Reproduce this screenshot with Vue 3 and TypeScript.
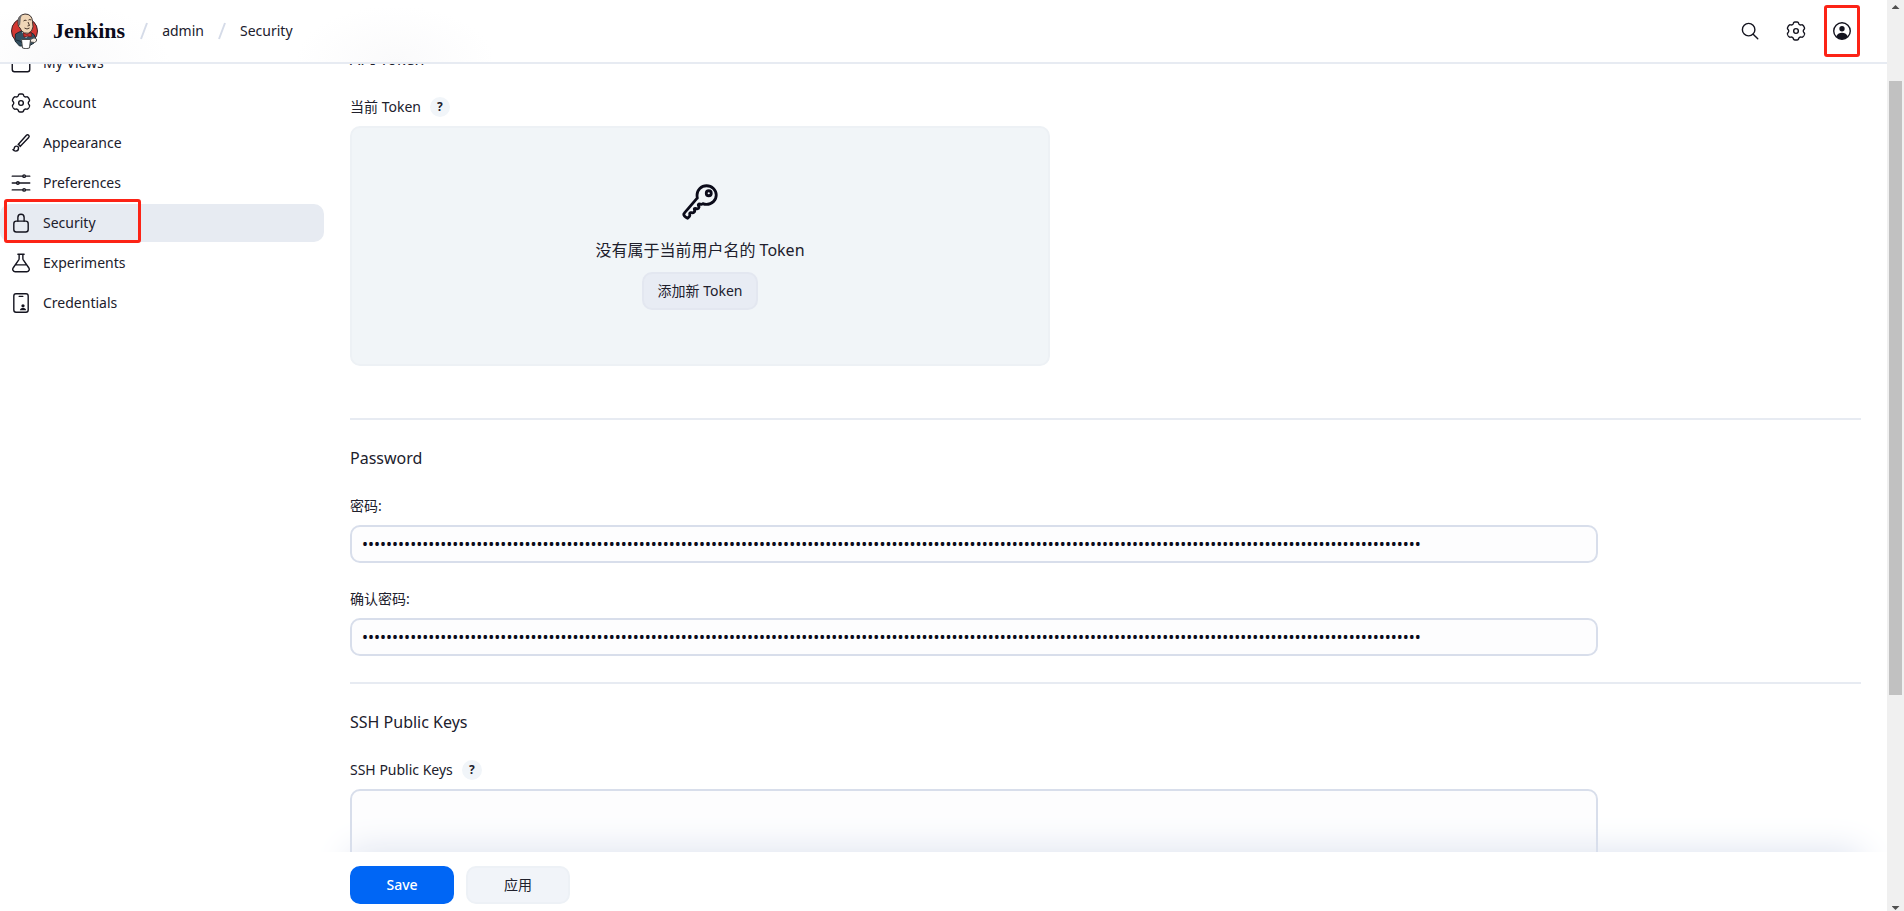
<script setup lang="ts">
import { ref } from 'vue'

type IconName = 'views' | 'gear' | 'brush' | 'options' | 'lock' | 'flask' | 'badge'

interface Task {
  label: string
  icon: IconName
}

const tasks: Task[] = [
  { label: 'My Views', icon: 'views' },
  { label: 'Account', icon: 'gear' },
  { label: 'Appearance', icon: 'brush' },
  { label: 'Preferences', icon: 'options' },
  { label: 'Security', icon: 'lock' },
  { label: 'Experiments', icon: 'flask' },
  { label: 'Credentials', icon: 'badge' },
]

const active = ref('Security')
const password = ref('x'.repeat(176))
const confirmation = ref('x'.repeat(176))
const sshKeys = ref('')

// Six-lobed gear outline, centred in a 512 unit box.
function gearOutline(): string {
  const points: string[] = []
  for (let i = 0; i < 180; i++) {
    const a = (i * Math.PI) / 90
    const wave = Math.tanh(0.8 + 2 * Math.cos(6 * (a + Math.PI / 2)))
    const r = 208 + 24 * wave
    points.push(`${(256 + r * Math.cos(a)).toFixed(1)} ${(256 + r * Math.sin(a)).toFixed(1)}`)
  }
  return `M${points.join('L')}Z`
}

const gear = gearOutline()
</script>

<template>
  <div class="window">
    <div class="page">
      <header class="topbar">
        <a class="brand" href="#">
          <svg class="logo" viewBox="0 0 54 72" aria-hidden="true">
            <circle cx="27" cy="36" r="26" fill="#d33833" stroke="#3a2326" stroke-width="2" />
            <path d="M9 42q7-5 15-6l16 3q8 3 9 11l-3 10-10 6H17L8 56z" fill="#335061" stroke="#1d2b35" stroke-width="2" />
            <path d="M22 38l8 12 8-9-4-7z" fill="#fff" />
            <path d="M14 20Q13 4 28 2q14 0 15 15 3 12-2 19-6 7-14 4-7-3-9-10-4-2-4-10z" fill="#f0d6b7" stroke="#3a2f2c" stroke-width="2" />
            <path d="M14 20Q12 7 22 4q-4 7-3 13l-1 8q-4 0-4-5z" fill="#6d6b6d" />
            <path d="M25 16q3-3 6-1M35 14q3-2 5 0M34 18l3 7-4 1M27 30q5 4 10 0" fill="none" stroke="#49372c" stroke-width="2" />
            <path d="M25 40l7 3 8-4 1 8-8-1-7 2z" fill="#d33833" stroke="#7b1c1c" stroke-width="2" />
            <path d="M21 53h18l-2 17q-7 3-14 0z" fill="#fff" stroke="#4c4c4c" stroke-width="2" />
            <path d="M39 53q8-6 12-1 2 5-4 7l-8-1z" fill="#f4ece2" stroke="#4c4c4c" stroke-width="2" />
            <path d="M10 54q7 1 12 5" fill="none" stroke="#1d2b35" stroke-width="2" />
          </svg>
          <span>Jenkins</span>
        </a>
        <nav class="crumbs" aria-label="Breadcrumbs">
          <svg class="slash" viewBox="0 0 8 18" aria-hidden="true"><path d="M7 1L1 17" /></svg>
          <a href="#">admin</a>
          <svg class="slash" viewBox="0 0 8 18" aria-hidden="true"><path d="M7 1L1 17" /></svg>
          <a href="#">Security</a>
        </nav>
        <div class="actions">
          <button type="button" class="action" aria-label="Search">
            <svg class="icon" viewBox="0 0 512 512">
              <circle cx="221" cy="221" r="160" />
              <path d="M338 338l116 116" />
            </svg>
          </button>
          <button type="button" class="action" aria-label="Manage Jenkins">
            <svg class="icon" viewBox="0 0 512 512">
              <path :d="gear" />
              <circle cx="256" cy="256" r="60" />
            </svg>
          </button>
          <button type="button" class="action marked" aria-label="User">
            <svg class="icon" viewBox="0 0 512 512">
              <circle cx="256" cy="256" r="212" />
              <circle class="solid" cx="256" cy="198" r="68" />
              <path class="solid" d="M108 398c30-72 90-98 148-98s118 26 148 98c-40 44-92 70-148 70s-108-26-148-70z" />
            </svg>
          </button>
        </div>
      </header>

      <div class="body">
        <nav class="tasks" aria-label="User">
          <a
            v-for="task in tasks"
            :key="task.label"
            href="#"
            class="task"
            :class="{ active: task.label === active }"
            @click.prevent="active = task.label"
          >
            <svg class="icon" viewBox="0 0 512 512" aria-hidden="true">
              <template v-if="task.icon === 'views'">
                <rect x="32" y="64" width="448" height="416" rx="56" />
                <path d="M32 160h448" />
              </template>
              <template v-else-if="task.icon === 'gear'">
                <path :d="gear" />
                <circle cx="256" cy="256" r="60" />
              </template>
              <path
                v-else-if="task.icon === 'brush'"
                d="M452.37 59.63a40.49 40.49 0 00-57.26 0L184 294.74c23.08 4.7 46.12 27.29 49.26 49.26l219.11-227.11a40.49 40.49 0 000-57.26zM138 336c-29.88 0-54 24.5-54 54.86 0 23.95-20.88 36.57-36 36.57C64.56 449.74 92.82 464 120 464c39.78 0 72-32.73 72-73.14 0-30.36-24.12-54.86-54-54.86z"
              />
              <template v-else-if="task.icon === 'options'">
                <path d="M368 80h112M32 80h272M368 432h112M32 432h272M208 256h272M32 256h112" />
                <circle cx="336" cy="80" r="32" />
                <circle cx="176" cy="256" r="32" />
                <circle cx="336" cy="432" r="32" />
              </template>
              <template v-else-if="task.icon === 'lock'">
                <path d="M336 208v-95a80 80 0 00-160 0v95" />
                <rect x="72" y="208" width="368" height="280" rx="64" />
              </template>
              <path
                v-else-if="task.icon === 'flask'"
                d="M176 32h160M112 304h288M208 32v109a64 64 0 01-10 34L54 384c-26 42 4 94 52 94h300c48 0 78-52 52-94L314 175a64 64 0 01-10-34V32"
              />
              <template v-else>
                <rect x="72" y="18" width="368" height="476" rx="56" />
                <path d="M208 86h96" />
                <circle class="solid" cx="307" cy="328" r="42" />
                <path class="solid" d="M226 442c4-42 44-58 81-58s77 16 81 58z" />
              </template>
            </svg>
            <span>{{ task.label }}</span>
          </a>
        </nav>

        <form class="content" @submit.prevent>
          <section class="section">
            <h2>API Token</h2>
            <div class="label-row">
              <span>当前 Token</span>
              <button type="button" class="help" aria-label="Help for Token">?</button>
            </div>
            <div class="tokens">
              <svg class="icon key" viewBox="0 0 512 512" aria-hidden="true">
                <path d="M218.1 167.17c0 13 0 25.6 4.1 37.4-43.1 50.6-156.9 184.3-167.5 194.5a20.17 20.17 0 00-6.7 15c0 8.5 5.2 16.7 9.6 21.3 6.6 6.9 34.8 33 40 28 15.4-15 18.5-19 24.8-25.2 9.5-9.3-1-28.3 2.3-36s6.8-9.2 12.5-10.4 15.8 2.9 23.7 3c8.3.1 12.8-3.4 19-9.2 5-4.6 8.6-8.9 8.7-15.6.2-9-12.8-20.9-3.1-30.4s23.7 6.2 34 5 22.8-15.5 24.1-21.6-11.7-21.8-9.7-30.7c.7-3 6.8-10 11.4-11s25 6.9 29.6 5.9c5.6-1.2 12.1-7.1 17.4-10.4 15.5 6.7 29.6 9.4 47.7 9.4 68.5 0 124-53.4 124-119.2S408.5 48 340 48s-121.9 53.37-121.9 119.17z" />
                <circle cx="368" cy="144" r="32" />
              </svg>
              <p>没有属于当前用户名的 Token</p>
              <button type="button" class="button add">添加新 Token</button>
            </div>
          </section>

          <section class="section ruled">
            <h2>Password</h2>
            <div class="label-row"><label for="password">密码:</label></div>
            <input id="password" v-model="password" class="field" type="password" autocomplete="off" />
            <div class="label-row next"><label for="confirmation">确认密码:</label></div>
            <input id="confirmation" v-model="confirmation" class="field" type="password" autocomplete="off" />
          </section>

          <section class="section ruled">
            <h2>SSH Public Keys</h2>
            <div class="label-row">
              <label for="ssh-keys">SSH Public Keys</label>
              <button type="button" class="help" aria-label="Help for SSH Public Keys">?</button>
            </div>
            <textarea id="ssh-keys" v-model="sshKeys" class="field area"></textarea>
          </section>
        </form>
      </div>

      <footer class="savebar">
        <button type="button" class="button primary">Save</button>
        <button type="button" class="button">应用</button>
      </footer>
    </div>

    <div class="scrollbar" aria-hidden="true">
      <span class="arrow up"></span>
      <span class="track"><span class="thumb"></span></span>
      <span class="arrow down"></span>
    </div>
  </div>
</template>

<style>
body {
  background: #fff;
}
</style>

<style scoped>
.window {
  --ink: #20202c;
  --line: #e7ebf2;
  display: grid;
  grid-template-columns: minmax(0, 1fr) 17px;
  height: 100vh;
  overflow: hidden;
  color: var(--ink);
  font: 14px/20px "Noto Sans", "Noto Sans CJK SC", sans-serif;
}
.window *,
.window *::before,
.window *::after {
  box-sizing: border-box;
}
.page {
  display: flex;
  flex-direction: column;
  min-width: 0;
  height: 100vh;
  overflow: hidden;
}
a {
  color: inherit;
  text-decoration: none;
}
button {
  padding: 0;
  border: 0;
  background: none;
  color: inherit;
  font: inherit;
}
.icon {
  flex: none;
  width: 20px;
  height: 20px;
  fill: none;
  stroke: #14141f;
  stroke-width: 36;
  stroke-linecap: round;
  stroke-linejoin: round;
}
.solid {
  fill: #14141f;
  stroke: none;
}

.topbar {
  position: relative;
  z-index: 2;
  display: flex;
  flex: none;
  align-items: center;
  height: 64px;
  padding: 0 27px 0 11px;
  background:
    radial-gradient(ellipse 110px 60px at 60px 62px, #fafafb, transparent),
    radial-gradient(ellipse 100px 56px at 395px 62px, #fafafb, transparent),
    #fff;
  border-bottom: 2px solid var(--line);
}
.brand {
  display: flex;
  align-items: center;
  gap: 15px;
  font: bold 22px/28px "Liberation Serif", serif;
  color: #0b0b1a;
}
.logo {
  width: 27px;
  height: 36px;
}
.crumbs {
  display: flex;
  align-items: center;
  gap: 14px;
  margin-left: 15px;
}
.slash {
  width: 8px;
  height: 18px;
  fill: none;
  stroke: #d5dbe8;
  stroke-width: 2;
}
.actions {
  display: flex;
  gap: 10px;
  margin-left: auto;
}
.action {
  display: flex;
  align-items: center;
  justify-content: center;
  width: 36px;
  height: 52px;
}
.marked {
  border: 3px solid #fc2316;
  border-radius: 3px;
}

.body {
  display: grid;
  grid-template-columns: 324px minmax(0, 1fr);
  flex: 1;
  gap: 26px;
  min-height: 0;
  margin-top: -20px;
  padding-right: 26px;
}
.tasks {
  display: flex;
  flex-direction: column;
  gap: 2px;
}
.task {
  position: relative;
  display: flex;
  align-items: center;
  gap: 12px;
  height: 38px;
  padding-left: 11px;
  border-radius: 10px;
}
.task.active {
  background: var(--line);
}
.task.active::after {
  position: absolute;
  top: -5px;
  left: 4px;
  width: 137px;
  height: 44px;
  border: 3px solid #fc2316;
  border-radius: 3px;
  content: "";
}

.section.ruled {
  border-top: 2px solid var(--line);
  padding-top: 23px;
  margin-top: 26px;
}
h2 {
  margin: 0 0 23px;
  font-size: 16px;
  font-weight: 400;
  line-height: 30px;
}
.label-row {
  display: flex;
  align-items: center;
  gap: 9px;
  height: 20px;
  margin-bottom: 9px;
}
.label-row.next {
  margin-top: 26px;
}
.help {
  width: 20px;
  height: 20px;
  border-radius: 10px;
  background: #f1f5f9;
  font-size: 12px;
  font-weight: 700;
  line-height: 20px;
}
.tokens {
  display: flex;
  flex-direction: column;
  align-items: center;
  justify-content: center;
  max-width: 700px;
  height: 240px;
  margin-bottom: 52px;
  border: 2px solid #edf1f5;
  border-radius: 10px;
  background: #f1f5f8;
}
.key {
  width: 40px;
  height: 40px;
  stroke: #0b0b1a;
}
.tokens p {
  margin: 16px 0 10px;
  font-size: 16px;
  line-height: 24px;
}
.button {
  width: 104px;
  height: 38px;
  border: 2px solid #edf1f6;
  border-radius: 10px;
  background: #f1f4f9;
}
.button.add {
  width: auto;
  padding: 0 14px;
  border-color: #e3e7f0;
  background: #e8ecf4;
}
.button.primary {
  border-color: #0066f5;
  background: #0066f5;
  color: #fff;
  font-weight: 500;
}
.field {
  display: block;
  width: calc(100% - 263px);
  height: 38px;
  padding: 0 10px;
  border: 2px solid #d8deeb;
  border-radius: 10px;
  outline: 0;
  background: #fdfdfe;
  color: #0b0b1a;
  font: 16px/20px "Noto Sans", sans-serif;
}
.area {
  height: 120px;
  padding: 10px;
  resize: none;
}
.savebar {
  position: relative;
  z-index: 1;
  display: flex;
  flex: none;
  gap: 12px;
  height: 59px;
  margin: 0 26px 0 350px;
  padding-top: 14px;
  background: #fff;
}
.savebar::before {
  position: absolute;
  inset: 0;
  box-shadow: 0 0 36px #dae0ee;
  clip-path: inset(-40px -26px 100% -40px);
  content: "";
}

.scrollbar {
  display: flex;
  flex-direction: column;
  align-items: center;
  background: #f0f0f0;
}
.track {
  flex: 1;
  width: 13px;
  padding-top: 64px;
}
.thumb {
  display: block;
  height: calc(100% - 200px);
  background: #c1c1c1;
}
.arrow {
  width: 8px;
  height: 4px;
  background: #505050;
}
.arrow.up {
  margin: 5px 0 8px;
  clip-path: polygon(50% 0, 100% 100%, 0 100%);
}
.arrow.down {
  margin: 11px 0 1px;
  clip-path: polygon(0 0, 100% 0, 50% 100%);
}
</style>
